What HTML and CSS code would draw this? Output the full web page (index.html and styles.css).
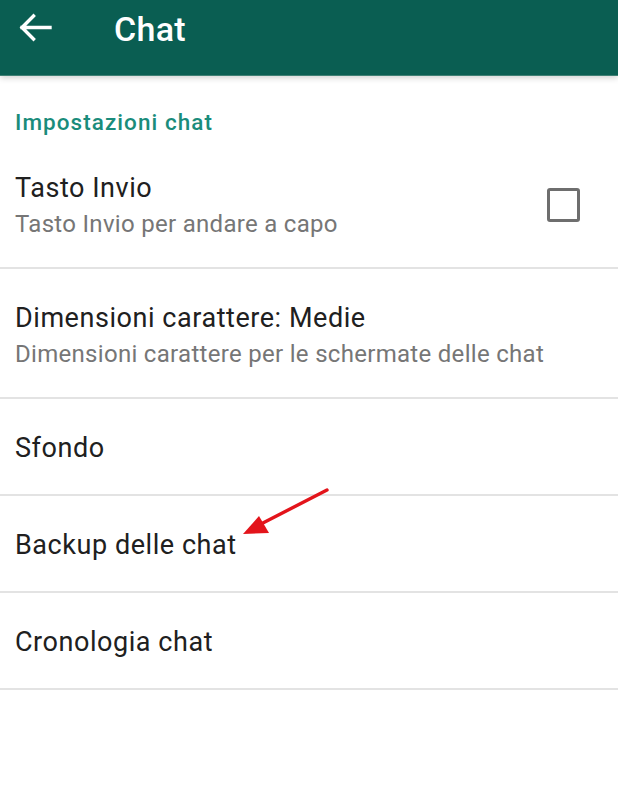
FILE: index.html
```html
<!DOCTYPE html>
<html lang="it">
<head>
<meta charset="utf-8">
<title>Chat</title>
<link rel="stylesheet" href="styles.css">
</head>
<body>
<div class="screen">
  <header class="appbar">
    <svg class="back" width="40" height="40" viewBox="0 0 40 40" aria-hidden="true">
      <path d="M8 19.5H36 M8 19.5L19.5 8 M8 19.5L19.5 31" fill="none" stroke="#fff" stroke-width="3.4" stroke-linecap="square"/>
    </svg>
    <h1 class="title">Chat</h1>
  </header>
  <main class="list">
    <div class="section">Impostazioni chat</div>
    <div class="row two">
      <div class="text">
        <div class="primary">Tasto Invio</div>
        <div class="secondary">Tasto Invio per andare a capo</div>
      </div>
      <span class="checkbox"></span>
    </div>
    <div class="row two">
      <div class="text">
        <div class="primary">Dimensioni carattere: Medie</div>
        <div class="secondary">Dimensioni carattere per le schermate delle chat</div>
      </div>
    </div>
    <div class="row one"><div class="primary">Sfondo</div></div>
    <div class="row one"><div class="primary">Backup delle chat</div></div>
    <div class="row one"><div class="primary">Cronologia chat</div></div>
  </main>
  <svg class="pointer" width="100" height="60" viewBox="0 0 100 60" aria-hidden="true">
    <line x1="92" y1="10" x2="24" y2="45" stroke="#e3141b" stroke-width="3.4" stroke-linecap="round"/>
    <polygon points="8,54 24,36 34,53" fill="#e3141b"/>
  </svg>
</div>
</body>
</html>
```

FILE: styles.css
```css
* { box-sizing: border-box; }
html, body { margin: 0; padding: 0; background: #fff; }
body { font-family: Roboto, "Noto Sans", "Liberation Sans", sans-serif; }

.screen { position: relative; width: 618px; height: 793px; overflow: hidden; background: #fff; }

.appbar {
  height: 75px;
  background: #0a5e52;
  display: flex;
  align-items: flex-start;
  padding: 8px 0 0 14px;
  box-shadow: 0 1px 0 #3f8074, 0 3px 6px rgba(0,0,0,0.18);
  position: relative;
  z-index: 1;
}
.back { display: block; flex: none; }
.title {
  margin: -1px 0 0 60px;
  color: #fff;
  font-size: 34px;
  font-weight: 500;
  line-height: 44px;
  letter-spacing: 0.3px;
}

.list { display: flex; flex-direction: column; }

.section {
  height: 64px;
  padding: 35px 0 0 15px;
  color: #1a8c7b;
  font-size: 22.5px;
  font-weight: 500;
  line-height: 24px;
  letter-spacing: 1.05px;
}

.row {
  display: flex;
  padding: 0 38px 0 15px;
  border-bottom: 2px solid #e3e3e3;
}
.row.two { height: 130px; align-items: flex-start; padding-top: 33px; }
.row.one { height: 97px; align-items: center; padding-top: 3px; }

.text { flex: 1; display: flex; flex-direction: column; }
.primary { color: #202020; font-size: 27px; line-height: 32px; letter-spacing: 0.55px; }
.secondary { color: #767676; font-size: 24px; line-height: 40px; letter-spacing: 0.3px; }

.checkbox {
  flex: none;
  margin-top: 16px;
  width: 33px;
  height: 34px;
  border: 3px solid #6e6e6e;
  border-radius: 3px;
}

.pointer { position: absolute; left: 235px; top: 480px; }
```
